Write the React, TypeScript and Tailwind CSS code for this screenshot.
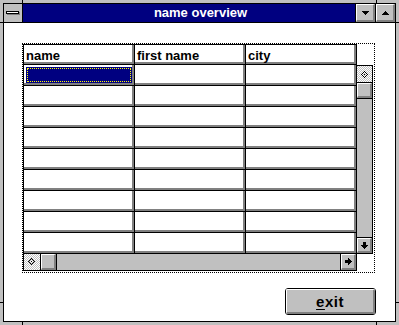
import React from "react";

const bevel =
  "bg-[#c0c0c0] border-t border-l border-t-white border-l-white border-r-2 border-b-2 border-r-[#808080] border-b-[#808080]";

function Dither({ id, w, h, dir }: { id: string; w: number; h: number; dir: "up" | "left" }) {
  const cx = dir === "up" ? 5 : 5;
  const cy = dir === "up" ? 6 : 5;
  const pts = [
    [3, 0], [2, 1], [4, 1], [1, 2], [5, 2], [0, 3], [6, 3], [1, 4], [5, 4], [2, 5], [4, 5], [3, 6], [3, 3],
  ];
  return (
    <svg width={w} height={h} className="block shrink-0" shapeRendering="crispEdges">
      <defs>
        <pattern id={id} width="2" height="2" patternUnits="userSpaceOnUse">
          <rect width="2" height="2" fill="#ffffff" />
          <rect width="1" height="1" fill="#c0c0c0" />
          <rect x="1" y="1" width="1" height="1" fill="#c0c0c0" />
        </pattern>
      </defs>
      <rect width={w} height={h} fill={`url(#${id})`} />
      {pts.map(([x, y], i) => (
        <rect key={i} x={cx + x - 1} y={cy + y - 1} width="1" height="1" fill="#000" />
      ))}
    </svg>
  );
}

function Cell({ selected }: { selected?: boolean }) {
  return (
    <div className="bg-white border-r-2 border-b-2 border-[#808080]">
      {selected && (
        <div className="ml-[2px] mt-[2px] h-[16px] bg-[#000080] p-px">
          <div className="h-full border border-dotted border-[#ffff00]" />
        </div>
      )}
    </div>
  );
}

function Head({ label }: { label: string }) {
  return (
    <div className="bg-white border-r-2 border-b-2 border-[#808080]">
      <span className="block pl-[2px] mt-[2px] leading-[17px] text-[13px] font-bold text-black whitespace-nowrap">
        {label}
      </span>
    </div>
  );
}

export default function App() {
  const rows = Array.from({ length: 9 }, (_, r) => r);
  return (
    <div className="relative w-[399px] h-[325px] bg-[#c0c0c0] p-[3px] overflow-hidden font-['Liberation_Sans',Arial,sans-serif]">
      {/* frame notches */}
      <div className="absolute left-[22px] top-0 w-px h-[3px] bg-black" />
      <div className="absolute left-[376px] top-0 w-px h-[3px] bg-black" />
      <div className="absolute left-[22px] bottom-0 w-px h-[3px] bg-black" />
      <div className="absolute left-[376px] bottom-0 w-px h-[3px] bg-black" />
      <div className="absolute left-0 top-[22px] w-[3px] h-px bg-black" />
      <div className="absolute left-0 top-[302px] w-[3px] h-px bg-black" />
      <div className="absolute right-0 top-[22px] w-[3px] h-px bg-black" />
      <div className="absolute right-0 top-[302px] w-[3px] h-px bg-black" />

      <div className="h-full border border-black flex flex-col">
        {/* title bar */}
        <div className="h-[19px] flex border-b border-black shrink-0">
          <div className="w-[19px] border-r border-black bg-[#c0c0c0]">
            <svg width="18" height="18" className="block" shapeRendering="crispEdges">
              <rect x="3" y="8" width="13" height="3" fill="#808080" />
              <rect x="2" y="7" width="13" height="3" fill="#000" />
              <rect x="3" y="8" width="11" height="1" fill="#fff" />
            </svg>
          </div>
          <div className="flex-1 bg-[#000080] border-r border-black flex justify-center pl-[23px] text-white text-[13px] font-bold leading-[17px]">
            name overview
          </div>
          <div className="w-[20px] border-r border-black flex">
            <div className={`flex-1 ${bevel} flex items-center justify-center`}>
              <svg width="7" height="4" className="block" shapeRendering="crispEdges">
                <path d="M0 0h7v1H0z M1 1h5v1H1z M2 2h3v1H2z M3 3h1v1H3z" fill="#000" />
              </svg>
            </div>
          </div>
          <div className={`w-[19px] ${bevel} flex items-center justify-center`}>
            <svg width="7" height="4" className="block" shapeRendering="crispEdges">
              <path d="M3 0h1v1H3z M2 1h3v1H2z M1 2h5v1H1z M0 3h7v1H0z" fill="#000" />
            </svg>
          </div>
        </div>

        {/* client */}
        <div className="flex-1 bg-white pl-[18px] pt-[20px] flex flex-col">
          <div className="w-[353px] h-[230px] border border-dotted border-black flex">
            <div className="w-[334px] flex flex-col">
              <div className="grid grid-cols-[110px_110px_110px] grid-rows-[19px_repeat(9,20px)] gap-px bg-black p-px">
                <Head label="name" />
                <Head label="first name" />
                <Head label="city" />
                {rows.map((r) => (
                  <React.Fragment key={r}>
                    <Cell selected={r === 0} />
                    <Cell />
                    <Cell />
                  </React.Fragment>
                ))}
              </div>
              {/* horizontal scrollbar */}
              <div className="h-[17px] border-x border-b border-black flex bg-[#c0c0c0]">
                <Dither id="dl" w={16} h={16} dir="left" />
                <div className="w-px bg-black" />
                <div className={`w-[15px] ${bevel}`} />
                <div className="w-px bg-black" />
                <div className="flex-1" />
                <div className="w-px bg-black" />
                <div className={`w-[15px] ${bevel} flex items-center justify-center`}>
                  <svg width="7" height="7" className="block" shapeRendering="crispEdges">
                    <path d="M0 2h3v3H0z M3 0h1v7H3z M4 1h1v5H4z M5 2h1v3H5z M6 3h1v1H6z" fill="#000" />
                  </svg>
                </div>
              </div>
            </div>
            {/* vertical scrollbar */}
            <div className="w-[17px] pt-[21px]">
              <div className="w-[16px] h-[189px] border-t border-b border-r border-black flex flex-col bg-[#c0c0c0]">
                <Dither id="du" w={15} h={16} dir="up" />
                <div className="h-px bg-black" />
                <div className={`h-[15px] ${bevel}`} />
                <div className="h-px bg-black" />
                <div className="flex-1" />
                <div className="h-px bg-black" />
                <div className={`h-[15px] ${bevel} flex items-center justify-center`}>
                  <svg width="7" height="7" className="block" shapeRendering="crispEdges">
                    <path d="M2 0h3v3H2z M0 3h7v1H0z M1 4h5v1H1z M2 5h3v1H2z M3 6h1v1H3z" fill="#000" />
                  </svg>
                </div>
              </div>
            </div>
          </div>

          <div className="flex justify-end pr-[19px] mt-[15px]">
            <div className="w-[91px] h-[27px] border border-black rounded-[3px] bg-[#c0c0c0] overflow-hidden">
              <div className={`h-full ${bevel} flex items-center justify-center text-[15px] font-bold leading-[15px] tracking-[0.5px] text-black`}>
                <span>
                  <span className="underline underline-offset-[2px]">e</span>xit
                </span>
              </div>
            </div>
          </div>
        </div>
      </div>
    </div>
  );
}
